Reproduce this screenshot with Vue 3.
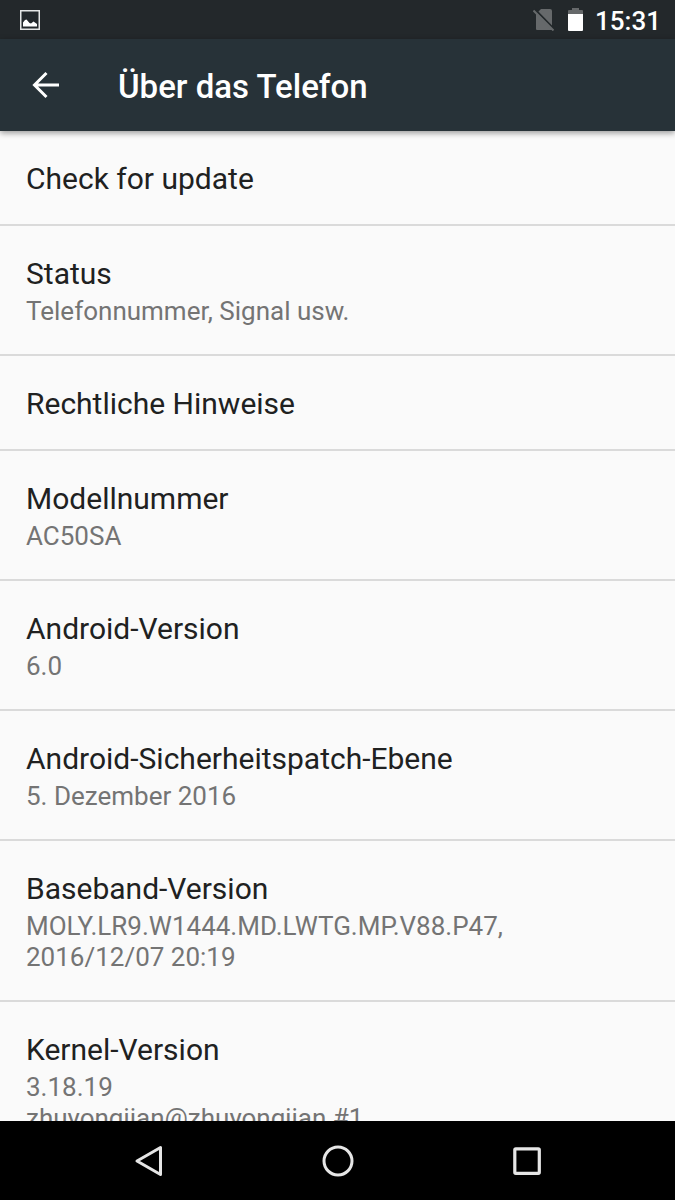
<script setup>
const entries = [
  { title: 'Check for update', lines: [] },
  { title: 'Status', lines: ['Telefonnummer, Signal usw.'] },
  { title: 'Rechtliche Hinweise', lines: [] },
  { title: 'Modellnummer', lines: ['AC50SA'] },
  { title: 'Android-Version', lines: ['6.0'] },
  { title: 'Android-Sicherheitspatch-Ebene', lines: ['5. Dezember 2016'] },
  { title: 'Baseband-Version', lines: ['MOLY.LR9.W1444.MD.LWTG.MP.V88.P47,', '2016/12/07 20:19'] },
  { title: 'Kernel-Version', lines: ['3.18.19', 'zhuyongjian@zhuyongjian #1'] },
]
</script>

<template>
  <div class="phone">
    <div class="status">
      <svg class="picture" width="20" height="20" viewBox="0 0 20 20" aria-hidden="true">
        <rect x="0.75" y="0.75" width="18.5" height="18.5" fill="none" stroke="#e4e5e5" stroke-width="1.5" />
        <path d="M3 16.5V12.5L5 10L6.5 9.5L9.5 13L11 13.5L13.5 11.5L17 14V16.5Z" fill="#fff" />
      </svg>
      <svg class="sim" width="22" height="23" viewBox="0 0 22 23" aria-hidden="true">
        <path d="M8 1H17Q19 1 19 3V22H4Q3 22 3 21V6Z" fill="#66696b" />
        <path d="M2 1.5L21.5 21.5" stroke="#23282b" stroke-width="2" />
        <path d="M0.5 2.5L20.5 22.5" stroke="#66696b" stroke-width="2" />
      </svg>
      <svg class="battery" width="17" height="23" viewBox="0 0 17 23" aria-hidden="true">
        <path d="M1 6V3Q1 2 2 2H5V0H12V2H15Q16 2 16 3V6Z" fill="#66696b" />
        <path d="M1 6H16V22Q16 23 15 23H2Q1 23 1 22Z" fill="#fff" />
      </svg>
      <time class="clock">15:31</time>
    </div>

    <header class="bar">
      <button class="back" type="button" aria-label="Zurück">
        <svg width="28" height="28" viewBox="0 0 28 28" aria-hidden="true">
          <path d="M27 14H3M14.5 2L2.5 14L14.5 26" fill="none" stroke="#fff" stroke-width="3" />
        </svg>
      </button>
      <h1>Über das Telefon</h1>
    </header>

    <main class="content">
      <ul class="list">
        <li v-for="entry in entries" :key="entry.title" class="entry">
          <h2>{{ entry.title }}</h2>
          <div v-if="entry.lines.length" class="summary">
            <p v-for="line in entry.lines" :key="line">{{ line }}</p>
          </div>
        </li>
      </ul>
    </main>

    <nav class="nav">
      <button type="button" aria-label="Zurück">
        <svg width="32" height="32" viewBox="0 0 32 32" aria-hidden="true">
          <path d="M4 16L27.5 2.5V29.5Z" fill="none" stroke="#e6e6e6" stroke-width="3" stroke-linejoin="round" />
        </svg>
      </button>
      <button type="button" aria-label="Startseite">
        <svg width="32" height="32" viewBox="0 0 32 32" aria-hidden="true">
          <circle cx="16" cy="16" r="14" fill="none" stroke="#e6e6e6" stroke-width="3" />
        </svg>
      </button>
      <button type="button" aria-label="Übersicht">
        <svg width="32" height="32" viewBox="0 0 32 32" aria-hidden="true">
          <rect x="3.8" y="3.8" width="24.5" height="24.5" rx="1" fill="none" stroke="#e6e6e6" stroke-width="3.2" />
        </svg>
      </button>
    </nav>
  </div>
</template>

<style>
body {
  margin: 0;
}
</style>

<style scoped>
.phone {
  height: 100vh;
  display: flex;
  flex-direction: column;
  overflow: hidden;
  background: #fafafa;
  color: #202121;
  font-family: Roboto, "Liberation Sans", sans-serif;
}

.status {
  flex: none;
  display: flex;
  align-items: center;
  height: 39px;
  padding: 0 14px 0 20px;
  box-sizing: border-box;
  background: #23282b;
  color: #fff;
}

.sim {
  margin-left: auto;
}

.battery {
  margin: 0 11px 0 12px;
}

.clock {
  padding-top: 3px;
  font-size: 26px;
  line-height: 36px;
  font-weight: 500;
}

.bar {
  position: relative;
  flex: none;
  display: flex;
  align-items: center;
  height: 92px;
  background: #273238;
  color: #fff;
  box-shadow: 0 2px 6px rgba(0, 0, 0, 0.4);
}

.bar h1 {
  margin: 0;
  padding-top: 3px;
  font-size: 33px;
  line-height: 40px;
  font-weight: 500;
}

button {
  display: flex;
  align-items: center;
  justify-content: center;
  padding: 0;
  border: 0;
  background: none;
}

.back {
  width: 92px;
  height: 92px;
  margin-right: 26px;
}

.content {
  flex: 1;
  min-height: 0;
  overflow: hidden;
}

.list {
  margin: 0;
  padding: 0;
  list-style: none;
}

.entry {
  padding: 30px 26px 27px;
  border-bottom: 2px solid #dadada;
}

.entry h2 {
  margin: 0;
  font-size: 30px;
  line-height: 36px;
  font-weight: 400;
}

.summary {
  margin-top: 4px;
  color: #747474;
  font-size: 26px;
  line-height: 31px;
}

.summary p {
  margin: 0;
}

.nav {
  flex: none;
  display: flex;
  justify-content: center;
  height: 79px;
  background: #000;
}

.nav button {
  width: 28%;
}
</style>
